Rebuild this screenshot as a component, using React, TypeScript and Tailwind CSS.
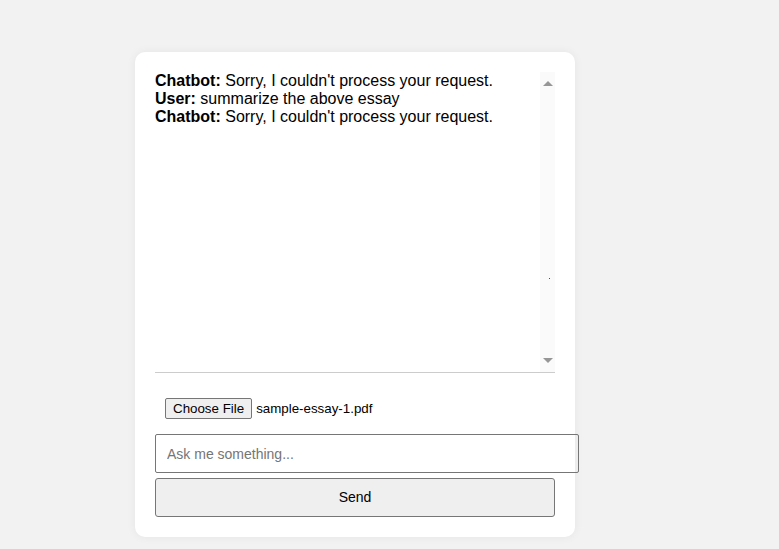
import { useState } from "react";

const messages = [
  { who: "Chatbot", text: "Sorry, I couldn't process your request." },
  { who: "User", text: "summarize the above essay" },
  { who: "Chatbot", text: "Sorry, I couldn't process your request." },
];

export default function App() {
  const [query, setQuery] = useState("");

  return (
    <div
      className="min-h-screen w-full bg-[#f2f2f2] pt-[52px] pl-[135px]"
      style={{ fontFamily: '"Liberation Sans", Arial, sans-serif' }}
    >
      {/* Chat card */}
      <div className="w-[440px] rounded-[10px] bg-white p-5 shadow-[0_0_10px_rgba(0,0,0,0.06)]">
        {/* Messages */}
        <div className="flex h-[301px] w-[400px] border-b border-[#cccccc]">
          <div className="flex-1 text-[16px] leading-[18px] text-black">
            {messages.map((m, i) => (
              <div key={i}>
                <strong className="font-bold">{m.who}:</strong> {m.text}
              </div>
            ))}
          </div>
          {/* Scrollbar */}
          <div className="relative flex w-[15px] flex-col items-center justify-between bg-[#fafafa] py-[9px]">
            <div className="h-0 w-0 border-x-[5px] border-b-[5px] border-x-transparent border-b-[#969696]" />
            <div className="absolute top-[206px] left-[9px] h-px w-px bg-[#3b3bd6]" />
            <div className="h-0 w-0 border-x-[5px] border-t-[5px] border-x-transparent border-t-[#969696]" />
          </div>
        </div>

        {/* File picker */}
        <div className="mt-[25px] ml-[10px] flex items-center text-[13.33px] text-black">
          <button className="h-[21px] rounded-[2px] border border-[#767676] bg-[#efefef] px-[7px] leading-none">
            Choose File
          </button>
          <span className="ml-[4px]">sample-essay-1.pdf</span>
        </div>

        {/* Question input */}
        <input
          value={query}
          onChange={(e) => setQuery(e.target.value)}
          placeholder="Ask me something..."
          className="mt-[15px] block h-[39px] w-[424px] rounded-[2px] border border-[#767676] px-[11px] text-[14px] text-black placeholder-[#757575] outline-none"
        />

        {/* Send */}
        <button className="mt-[5px] block h-[39px] w-[400px] rounded-[3px] border border-[#767676] bg-[#efefef] text-[14px] text-black">
          Send
        </button>
      </div>
    </div>
  );
}
